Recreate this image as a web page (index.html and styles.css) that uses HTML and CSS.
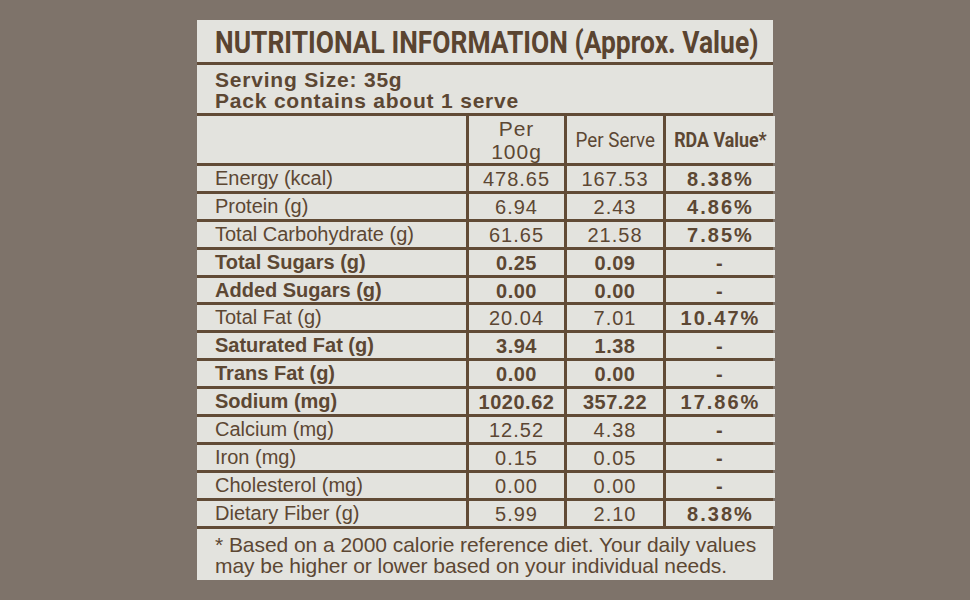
FILE: index.html
```html
<!DOCTYPE html>
<html>
<head>
<meta charset="utf-8">
<link rel="stylesheet" href="styles.css">
</head>
<body>
<div class="panel">
  <div class="title"><span class="title-text">NUTRITIONAL INFORMATION (Approx. Value)</span></div>
  <div class="serving">Serving Size: 35g<br>Pack contains about 1 serve</div>
  <div class="grid">
    <div class="cell head"></div>
    <div class="cell head per100">Per<br>100g</div>
    <div class="cell head"><span class="cond">Per Serve</span></div>
    <div class="cell head"><span class="cond bold">RDA Value*</span></div>

    <div class="cell label">Energy (kcal)</div><div class="cell num">478.65</div><div class="cell num">167.53</div><div class="cell rda">8.38%</div>
    <div class="cell label">Protein (g)</div><div class="cell num">6.94</div><div class="cell num">2.43</div><div class="cell rda">4.86%</div>
    <div class="cell label">Total Carbohydrate (g)</div><div class="cell num">61.65</div><div class="cell num">21.58</div><div class="cell rda">7.85%</div>
    <div class="cell label b">Total Sugars (g)</div><div class="cell num b">0.25</div><div class="cell num b">0.09</div><div class="cell rda">-</div>
    <div class="cell label b">Added Sugars (g)</div><div class="cell num b">0.00</div><div class="cell num b">0.00</div><div class="cell rda">-</div>
    <div class="cell label">Total Fat (g)</div><div class="cell num">20.04</div><div class="cell num">7.01</div><div class="cell rda">10.47%</div>
    <div class="cell label b">Saturated Fat (g)</div><div class="cell num b">3.94</div><div class="cell num b">1.38</div><div class="cell rda">-</div>
    <div class="cell label b">Trans Fat (g)</div><div class="cell num b">0.00</div><div class="cell num b">0.00</div><div class="cell rda">-</div>
    <div class="cell label b">Sodium (mg)</div><div class="cell num b">1020.62</div><div class="cell num b">357.22</div><div class="cell rda">17.86%</div>
    <div class="cell label">Calcium (mg)</div><div class="cell num">12.52</div><div class="cell num">4.38</div><div class="cell rda">-</div>
    <div class="cell label">Iron (mg)</div><div class="cell num">0.15</div><div class="cell num">0.05</div><div class="cell rda">-</div>
    <div class="cell label">Cholesterol (mg)</div><div class="cell num">0.00</div><div class="cell num">0.00</div><div class="cell rda">-</div>
    <div class="cell label">Dietary Fiber (g)</div><div class="cell num">5.99</div><div class="cell num">2.10</div><div class="cell rda">8.38%</div>
  </div>
  <div class="footer">* Based on a 2000 calorie reference diet. Your daily values<br>may be higher or lower based on your individual needs.</div>
</div>
</body>
</html>
```

FILE: styles.css
```css
html, body {
  margin: 0;
  padding: 0;
}
body {
  background: #7e736a;
  width: 970px;
  height: 600px;
  display: flex;
  justify-content: center;
  align-items: flex-start;
  padding-top: 20px;
  box-sizing: border-box;
  font-family: "Liberation Sans", Arial, sans-serif;
  color: #5c4733;
}
.panel {
  width: 576px;
  height: 560px;
  background: #e3e3de;
  display: flex;
  flex-direction: column;
}
.title {
  height: 42px;
  border-bottom: 3px solid #614b36;
  padding-left: 18px;
  box-sizing: content-box;
  overflow: hidden;
  white-space: nowrap;
}
.title-text {
  display: inline-block;
  font-family: Roboto, sans-serif;
  font-weight: 700;
  font-size: 31px;
  line-height: 42px;
  padding-top: 2px;
  transform: scaleX(0.852);
  transform-origin: left center;
  color: #5a4430;
}
.serving {
  height: 44px;
  padding: 4px 0 0 18px;
  font-weight: 700;
  font-size: 21px;
  line-height: 21px;
  letter-spacing: 0.8px;
}
.grid {
  display: grid;
  grid-template-columns: 269px 95px 96px 1fr;
  grid-template-rows: 47px repeat(13, 24.9px);
  column-gap: 3px;
  row-gap: 3px;
  padding: 3px 0;
  background: #614b36;
}
.cell {
  background: #e3e3de;
  font-size: 20px;
  line-height: 24.9px;
  white-space: nowrap;
}
.head {
  display: flex;
  align-items: center;
  justify-content: center;
  text-align: center;
}
.per100 {
  line-height: 23px;
  font-size: 21px;
  letter-spacing: 1px;
}
.cond {
  display: inline-block;
  font-family: Roboto, sans-serif;
  font-size: 20px;
  letter-spacing: 0;
  transform: scaleX(0.94);
  padding-top: 2px;
}
.cond.bold {
  font-weight: 700;
  font-size: 21px;
  transform: scaleX(0.85);
}
.label {
  padding-left: 18px;
}
.num {
  text-align: center;
  letter-spacing: 1px;
  padding-top: 1px;
}
.num.b {
  letter-spacing: 0.5px;
}
.b {
  font-weight: 700;
}
.rda {
  text-align: center;
  font-weight: 700;
  letter-spacing: 2px;
  padding-top: 1px;
}
.footer {
  flex: 1;
  padding: 5px 0 0 18px;
  font-size: 21px;
  line-height: 21px;
  letter-spacing: -0.05px;
}
```
